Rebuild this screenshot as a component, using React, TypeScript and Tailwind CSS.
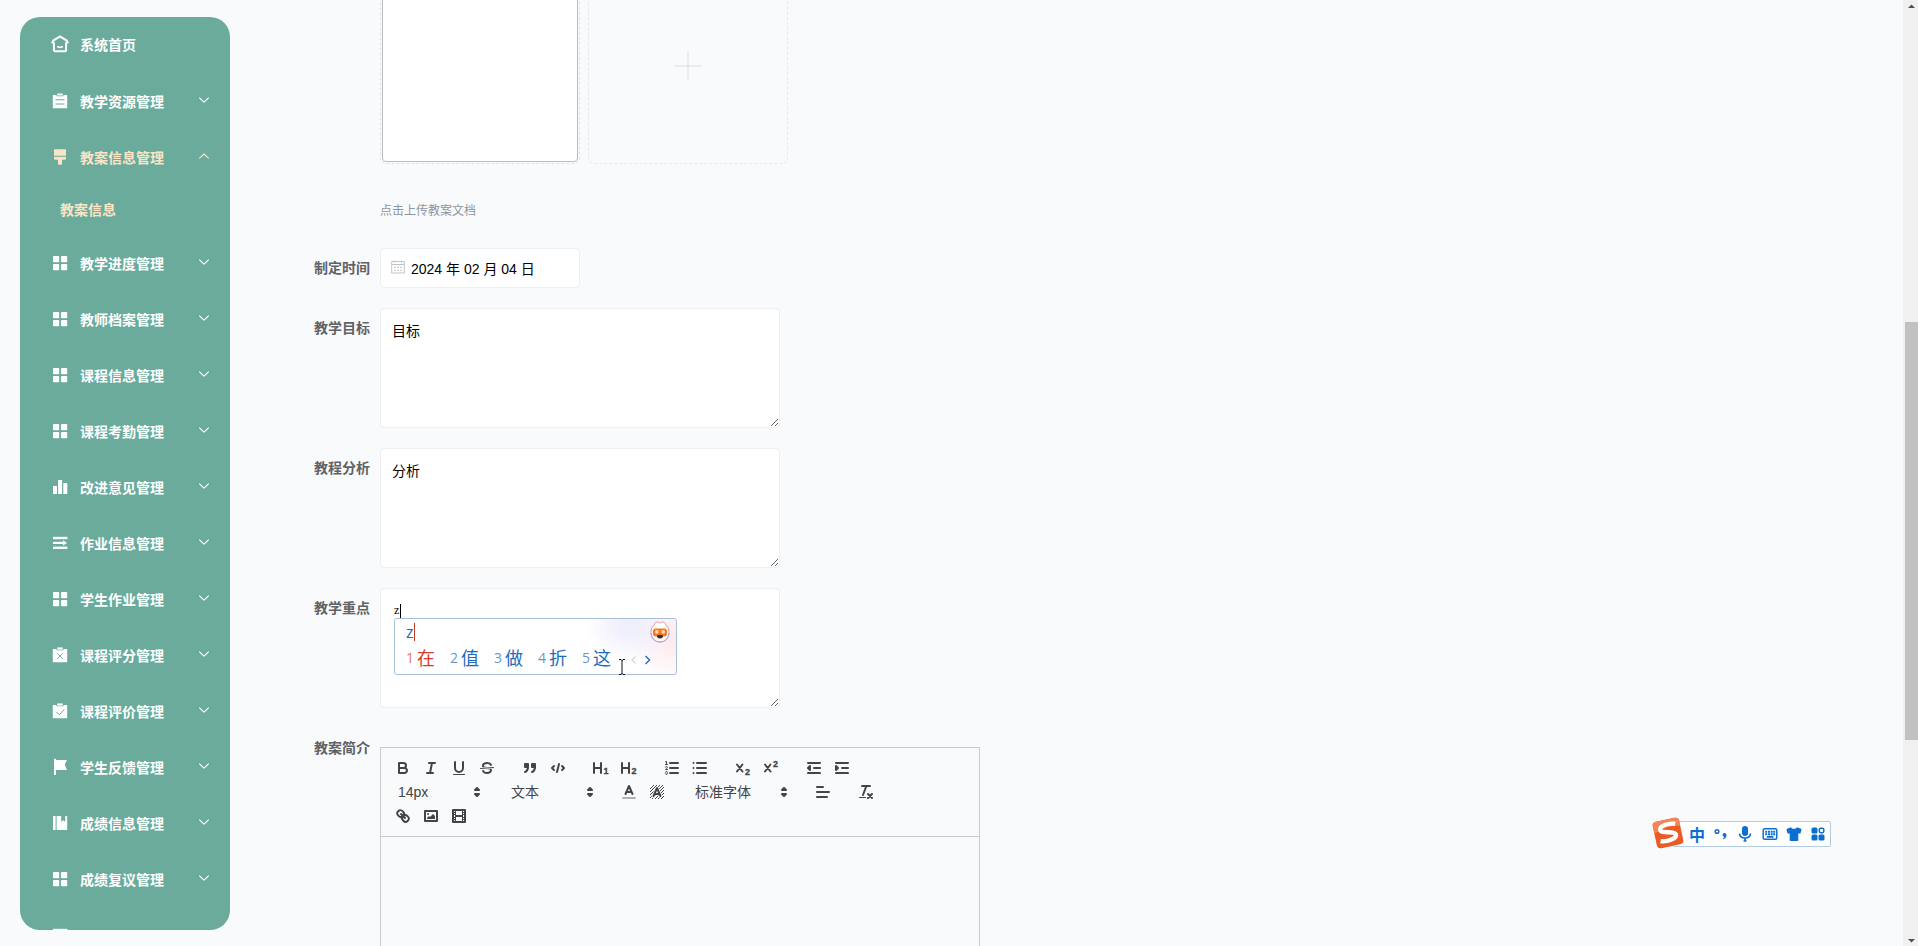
import React from "react";

const CJK = "font-['Noto_Sans_CJK_SC',sans-serif]";
const ARIAL = "font-['Liberation_Sans','Noto_Sans_CJK_SC',sans-serif]";

/* ---------- sidebar icons ---------- */

type IconName =
  | "home"
  | "order"
  | "brush"
  | "grid"
  | "data"
  | "operation"
  | "release"
  | "claim"
  | "flag"
  | "book";

function MenuIcon({ name }: { name: IconName }) {
  const hole = "#6aab9b";
  return (
    <svg viewBox="0 0 18 18" className="size-[18px] shrink-0" fill="currentColor" aria-hidden="true">
      {name === "home" && (
        <g fill="none" stroke="currentColor" strokeLinecap="round" strokeLinejoin="round">
          <path strokeWidth="2" d="M2.9 8V15.200a1 1 0 0 0 1 1H14.100a1 1 0 0 0 1-1V8M1.200 7.400 L2.200 5.700 9 1.300 15.800 5.700 16.800 7.400" />
          <path strokeWidth="1.800" d="M6.800 11.800q2.200 1 4.400 0" />
        </g>
      )}
      {(name === "order" || name === "release" || name === "claim") && (
        <>
          <path d="M2.300 3.100h3.200v1.200h7V3.100h3.200c.3 0 .5.200.5.500v12.200c0 .3-.2.500-.5.500H2.300a.5.500 0 0 1-.5-.5V3.600c0-.3.200-.5.500-.5z" />
          <path d="M6.300 1.400h5.400v2.200H6.300z" />
          {name === "order" && (
            <path d="M4.500 7.800h9M4.500 12h9" stroke={hole} strokeWidth="1" fill="none" />
          )}
          {name === "release" && (
            <path d="M6.200 7.300l5.600 5.600M11.800 7.300l-5.600 5.600" stroke={hole} strokeWidth="1" fill="none" />
          )}
          {name === "claim" && (
            <path d="M5.200 9.800l3 3 5-5.200" stroke={hole} strokeWidth="1" fill="none" />
          )}
        </>
      )}
      {name === "brush" && (
        <>
          <path d="M3.600 1.200h10.800c.4 0 .6.200.6.600v6H3v-6c0-.4.200-.6.600-.6z" />
          <path d="M3 8.800h12v1.400c0 .9-.6 1.500-1.500 1.500H11v4.100c0 .5-.3.900-.8.900H7.800c-.5 0-.8-.4-.8-.9v-4.100H4.500c-.9 0-1.500-.6-1.500-1.500z" />
        </>
      )}
      {name === "grid" && (
        <>
          <rect x="2" y="2" width="6.200" height="6.200" rx=".7" />
          <rect x="10" y="2" width="6.200" height="6.200" rx=".7" />
          <rect x="2" y="10" width="6.200" height="6.200" rx=".7" />
          <rect x="10" y="10" width="6.200" height="6.200" rx=".7" />
        </>
      )}
      {name === "data" && (
        <>
          <rect x="2" y="8" width="4" height="8" />
          <rect x="7.100" y="2" width="4" height="14" />
          <rect x="12.300" y="5" width="4" height="11" />
        </>
      )}
      {name === "operation" && (
        <>
          <rect x="2" y="2.800" width="14.400" height="2.400" />
          <rect x="2" y="7.800" width="10.500" height="2.200" />
          <path d="M12 6.300l4 2.600-4 2.600z" />
          <rect x="2" y="12.600" width="14.400" height="2.400" />
        </>
      )}
      {name === "flag" && <path d="M3 .8h1.900V2H16l-2.300 4.700L16 12H4.900v4.900H3z" />}
      {name === "book" && (
        <path d="M2 2h2.600v14H2zM5.600 2h4.600v5.700l2-1.400 2 1.400V2H15.700c.3 0 .5.200.5.500v13c0 .3-.2.500-.5.500H5.600z" />
      )}
    </svg>
  );
}

function Chevron({ up = false }: { up?: boolean }) {
  return (
    <svg viewBox="0 0 12 12" className="mb-0.5 size-3" fill="none" stroke="currentColor" strokeWidth="1.100" aria-hidden="true">
      <path d={up ? "M1.600 8.200 6 4l4.400 4.200" : "M1.600 4 6 8.200 10.400 4"} strokeLinecap="round" strokeLinejoin="round" />
    </svg>
  );
}

const MENU: { icon: IconName; label: string; children?: string[] }[] = [
  { icon: "order", label: "教学资源管理" },
  { icon: "brush", label: "教案信息管理", children: ["教案信息"] },
  { icon: "grid", label: "教学进度管理" },
  { icon: "grid", label: "教师档案管理" },
  { icon: "grid", label: "课程信息管理" },
  { icon: "grid", label: "课程考勤管理" },
  { icon: "data", label: "改进意见管理" },
  { icon: "operation", label: "作业信息管理" },
  { icon: "grid", label: "学生作业管理" },
  { icon: "release", label: "课程评分管理" },
  { icon: "claim", label: "课程评价管理" },
  { icon: "flag", label: "学生反馈管理" },
  { icon: "book", label: "成绩信息管理" },
  { icon: "grid", label: "成绩复议管理" },
];

function Sidebar() {
  return (
    <nav className="mt-[17px] mb-4 ml-5 w-[210px] shrink-0 overflow-hidden rounded-[20px] bg-[#6aab9b] text-sm font-bold text-white">
      <a href="#home" className="flex h-14 items-center gap-[11px] pb-0.5 pl-[31px]">
        <MenuIcon name="home" />
        <span>系统首页</span>
      </a>
      {MENU.map((item) => (
        <div key={item.label} className={item.children ? "text-[#fbe4c6]" : ""}>
          <button type="button" className="flex h-14 w-full items-center gap-[11px] pr-5 pl-[31px] text-left">
            <MenuIcon name={item.icon} />
            <span className="flex-1">{item.label}</span>
            <Chevron up={!!item.children} />
          </button>
          {item.children?.map((child) => (
            <a key={child} href="#plan" className="flex h-[50px] items-center pb-0.5 pl-10">
              {child}
            </a>
          ))}
        </div>
      ))}
      <div className="flex h-14 items-center pl-[31px]">
        <MenuIcon name="operation" />
      </div>
    </nav>
  );
}

/* ---------- editor toolbar ---------- */

function Glyph({ children }: { children: React.ReactNode }) {
  return (
    <svg
      viewBox="0 0 18 18"
      className="size-[18px]"
      fill="none"
      stroke="#444"
      strokeWidth="2"
      strokeLinecap="round"
      strokeLinejoin="round"
      aria-hidden="true"
    >
      {children}
    </svg>
  );
}

function Tool({ label, children }: { label: string; children: React.ReactNode }) {
  return (
    <button type="button" aria-label={label} className="flex h-6 w-7 items-center justify-center">
      <Glyph>{children}</Glyph>
    </button>
  );
}

function Group({ children }: { children: React.ReactNode }) {
  return <div className="mr-[15px] flex">{children}</div>;
}

function Picker({ label, value, wide = false }: { label: string; value: string; wide?: boolean }) {
  return (
    <div className={`grid h-6 items-center ${wide ? "w-[108px]" : "w-[98px]"}`}>
      <select
        aria-label={label}
        className="col-start-1 row-start-1 h-6 w-full appearance-none bg-transparent pl-[9px] text-sm text-[#444]"
      >
        <option>{value}</option>
      </select>
      <div className="pointer-events-none col-start-1 row-start-1 mr-px justify-self-end">
        <Glyph>
          <polygon points="7 11 9 13 11 11 7 11" />
          <polygon points="7 7 9 5 11 7 7 7" />
        </Glyph>
      </div>
    </div>
  );
}

function SmallDigit({ x, y, children }: { x: number; y: number; children: string }) {
  return (
    <text x={x} y={y} fill="#444" stroke="#444" strokeWidth=".3" fontSize="9" fontWeight="700" fontFamily="Liberation Sans, sans-serif">
      {children}
    </text>
  );
}

const HATCH = [-10, -7, -4, -1, 2, 5, 8, 11];

function Editor() {
  return (
    <div className="mt-[19px] w-[600px]">
      <div className={`flex flex-wrap border border-[#ccc] p-2 ${ARIAL}`}>
        <Group>
          <Tool label="加粗">
            <path d="M5,4H9.500A2.500,2.500,0,0,1,12,6.500v0A2.500,2.500,0,0,1,9.500,9H5V4Z" />
            <path d="M5,9h5.500A2.500,2.500,0,0,1,13,11.500v0A2.500,2.500,0,0,1,10.500,14H5V9Z" />
          </Tool>
          <Tool label="斜体">
            <path d="M7 4H13M5 14H11M8 14L10 4" />
          </Tool>
          <Tool label="下划线">
            <path d="M5,3V9a4.012,4.012,0,0,0,4,4H9a4.012,4.012,0,0,0,4-4V3" />
            <rect fill="#444" stroke="none" height="1" rx=".5" width="12" x="3" y="15" />
          </Tool>
          <Tool label="删除线">
            <line strokeWidth="1" x1="15.500" x2="2.500" y1="8.500" y2="9.500" />
            <g fill="#444" stroke="none">
              <path d="M9.007,8C6.542,7.791,6,7.519,6,6.5,6,5.792,7.283,5,9,5c1.571,0,2.765.679,2.969,1.309a1,1,0,0,0,1.9-.617C13.356,4.106,11.354,3,9,3,6.2,3,4,4.538,4,6.5a3.2,3.2,0,0,0,.5,1.843Z" />
              <path d="M8.984,10C11.457,10.208,12,10.479,12,11.5c0,0.708-1.283,1.5-3,1.5-1.571,0-2.765-.679-2.969-1.309a1,1,0,1,0-1.9.617C4.644,13.894,6.646,15,9,15c2.8,0,5-1.538,5-3.5a3.2,3.2,0,0,0-.5-1.843Z" />
            </g>
          </Tool>
        </Group>
        <Group>
          <Tool label="引用">
            <rect fill="#444" height="3" width="3" x="4" y="5" />
            <rect fill="#444" height="3" width="3" x="11" y="5" />
            <path fill="#444" d="M7,8c0,4.031-3,5-3,5" />
            <path fill="#444" d="M14,8c0,4.031-3,5-3,5" />
          </Tool>
          <Tool label="代码">
            <path d="M5 7 3 9 5 11M13 7 15 9 13 11M10 5 8 13" />
          </Tool>
        </Group>
        <Group>
          <Tool label="标题1">
            <path d="M2 4V14M9 4V14M2 9H9" />
            <SmallDigit x={11.5} y={15}>1</SmallDigit>
          </Tool>
          <Tool label="标题2">
            <path d="M2 4V14M9 4V14M2 9H9" />
            <SmallDigit x={11.5} y={15}>2</SmallDigit>
          </Tool>
        </Group>
        <Group>
          <Tool label="有序列表">
            <path d="M7 4H15M7 9H15M7 14H15" />
            <g strokeWidth="1">
              <path d="M2.500 5.500H4.500M2.500 2.800 3.500 2.400V5.500" />
              <path d="M4.500,10.500h-2c0-.234,1.850-1.076,1.850-2.234A0.959,0.959,0,0,0,2.500,8.156" />
              <path d="M2.500,14.846a0.959,0.959,0,0,0,1.850-.109A0.700,0.700,0,0,0,3.750,14a0.688,0.688,0,0,0,.6-0.736,0.959,0.959,0,0,0-1.850-.109" />
            </g>
          </Tool>
          <Tool label="无序列表">
            <path d="M6 4H15M6 9H15M6 14H15" />
            <path d="M2.500 4H2.500M2.500 9H2.500M2.500 14H2.500" />
          </Tool>
        </Group>
        <Group>
          <Tool label="下标">
            <path d="M3 5.500 8.500 12.500M8.500 5.500 3 12.500" />
            <SmallDigit x={11} y={16}>2</SmallDigit>
          </Tool>
          <Tool label="上标">
            <path d="M3 5.500 8.500 12.500M8.500 5.500 3 12.500" />
            <SmallDigit x={11} y={8}>2</SmallDigit>
          </Tool>
        </Group>
        <Group>
          <Tool label="减少缩进">
            <path d="M3 14H15M3 4H15M9 9H15" />
            <polygon fill="#444" points="5 7 5 11 3 9 5 7" />
          </Tool>
          <Tool label="增加缩进">
            <path d="M3 14H15M3 4H15M9 9H15" />
            <polygon fill="#444" points="3 7 3 11 5 9 3 7" />
          </Tool>
        </Group>
        <Group>
          <Picker label="字号" value="14px" />
        </Group>
        <Group>
          <Picker label="标题" value="文本" />
        </Group>
        <Group>
          <Tool label="文字颜色">
            <line opacity=".4" x1="3" x2="15" y1="15" y2="15" />
            <path d="M5.500 11 9 3 12.500 11M6.380 9H11.630" />
          </Tool>
          <Tool label="背景颜色">
            <g strokeWidth="1" strokeLinecap="butt">
              {HATCH.map((n) => {
                const a = Math.max(2, 2 + n);
                const b = Math.min(16, 16 + n);
                return <line key={n} x1={a} y1={18 - a + n} x2={b} y2={18 - b + n} />;
              })}
            </g>
            <path stroke="#fafbfd" strokeWidth="3.500" d="M5.500 13 9 5 12.500 13" />
            <path d="M5.500 13 9 5 12.500 13M6.380 11H11.630" />
          </Tool>
        </Group>
        <Group>
          <Picker label="字体" value="标准字体" wide />
        </Group>
        <Group>
          <Tool label="对齐">
            <path d="M3 9H15M3 14H13M3 4H9" />
          </Tool>
        </Group>
        <Group>
          <Tool label="清除格式">
            <path d="M5 3H13M6 12 9.350 3M11 11 15 15M15 11 11 15" />
            <rect fill="#444" stroke="none" height="1" rx=".5" width="7" x="2" y="14" />
          </Tool>
        </Group>
        <Group>
          <Tool label="链接">
            <line x1="7" x2="11" y1="7" y2="11" />
            <path d="M8.9,4.577a3.476,3.476,0,0,1,.36,4.679A3.476,3.476,0,0,1,4.577,8.9C3.185,7.5,2.035,6.4,4.217,4.217S7.5,3.185,8.9,4.577Z" />
            <path d="M13.423,9.1a3.476,3.476,0,0,0-4.679-.36,3.476,3.476,0,0,0,.36,4.679c1.392,1.392,2.5,2.542,4.679.36S14.815,10.5,13.423,9.1Z" />
          </Tool>
          <Tool label="图片">
            <rect height="10" width="12" x="3" y="4" />
            <circle fill="#444" stroke="none" cx="6" cy="7" r="1" />
            <polyline fill="#444" stroke="none" points="5 12 5 11 7 9 8 10 11 7 13 9 13 12 5 12" />
          </Tool>
          <Tool label="视频">
            <rect height="12" width="12" x="3" y="3" />
            <g fill="#444" stroke="none">
              <rect height="12" width="1" x="5" y="3" />
              <rect height="12" width="1" x="12" y="3" />
              <rect height="2" width="8" x="5" y="8" />
              {[5, 7, 10, 12].map((y) => (
                <React.Fragment key={y}>
                  <rect height="1" width="3" x="3" y={y} />
                  <rect height="1" width="3" x="12" y={y} />
                </React.Fragment>
              ))}
            </g>
          </Tool>
        </Group>
      </div>
      <div
        contentEditable
        suppressContentEditableWarning
        role="textbox"
        aria-label="教案简介"
        className="min-h-[300px] border border-t-0 border-[#ccc] px-4 py-3 text-sm outline-none"
      />
    </div>
  );
}

/* ---------- input method windows ---------- */

const CANDIDATES = ["在", "值", "做", "折", "这"];

function CandidateWindow() {
  return (
    <div className="absolute top-[30px] left-[14px] h-[57px] w-[283px] rounded-[3px] border border-[#a9bfd8] bg-white bg-[radial-gradient(45px_36px_at_84%_12%,#efeefb_20%,transparent_100%),radial-gradient(50px_46px_at_100%_35%,#fdeaee_10%,transparent_100%)] px-[11px] font-['Open_Sans','Noto_Sans_CJK_SC',sans-serif]">
      <div className="flex h-[26px] items-center justify-between">
        <span className="flex h-[18px] items-center border-r border-[#c0392b] text-base text-[#1d6cbd]">z</span>
        <svg viewBox="0 0 20 22" className="-mr-[5px] h-[22px] w-5" aria-hidden="true">
          <path d="M10 2.200C8 .2 4.800.6 4.400 3.800 2 5.500 1 8 1 11.500 1 17 5 21 10 21s9-4 9-9.500c0-3.500-1-6-3.400-7.700C15.200.6 12 .2 10 2.200z" fill="#fff" stroke="#f08f98" />
          <path d="M1 12c.2 5 4.200 9 9 9s8.800-4 9-9" fill="none" stroke="#8fb4ee" />
          <rect x="3" y="7.500" width="14" height="8" rx="2.500" fill="#f47a20" />
          <rect x="5.200" y="9.300" width="3.200" height="3.200" rx=".8" fill="#fbd9b5" />
          <rect x="11.600" y="9.300" width="3.200" height="3.200" rx=".8" fill="#fbd9b5" />
          <path d="M7 14.500q3-1.500 6 0 .3 3-3 3t-3-3z" fill="#3c2f2d" />
        </svg>
      </div>
      <div className="flex h-[26px] items-center">
        {CANDIDATES.map((c, i) => (
          <span
            key={c}
            className={`flex w-11 shrink-0 items-center gap-[3px] ${i === 0 ? "text-[#d93a2b]" : "text-[#1d6cbd]"}`}
          >
            <span className="w-2 text-sm opacity-70">{i + 1}</span>
            <span className="text-lg leading-6">{c}</span>
          </span>
        ))}
        <svg viewBox="0 0 26 12" className="mt-1 h-3 w-[26px] shrink-0" fill="none" strokeWidth="1.400" aria-hidden="true">
          <path d="M9.500 2.500 6 6l3.500 3.500" stroke="#d4d8dd" />
          <path d="M19.500 2 23.500 6l-4 4" stroke="#1d6cbd" />
        </svg>
      </div>
      <svg viewBox="0 0 8 18" className="absolute top-10 left-[223px] h-[18px] w-2" fill="none" stroke="#111" aria-hidden="true">
        <path d="M1 .5h2l1 1 1-1h2M4 1v14M1 15.500h2l1-1 1 1h2" />
      </svg>
    </div>
  );
}

function InputMethodBar() {
  return (
    <div className="absolute right-[87px] bottom-[95px] flex items-center">
      <svg viewBox="0 0 32 32" className="z-10 -mr-3 mb-0.5 size-8" aria-hidden="true">
        <g transform="rotate(-12 16 16)">
          <rect x="2.500" y="2.500" width="27" height="27" rx="4" fill="#ee5a24" />
          <path d="M2.500 6.500a4 4 0 0 1 4-4H25.500a4 4 0 0 1 4 4v5Q16 8 2.500 14z" fill="#f4845a" />
          <path
            d="M25 8.500C18 6 9 7.500 9 11.500S23 15 23.500 19 14 25 7 22.500"
            fill="none"
            stroke="#fff"
            strokeWidth="4.400"
          />
        </g>
      </svg>
      <div className="flex h-[26px] items-center rounded-[2px] border border-[#b4cbe4] bg-white pl-3 text-[#0b6fd0]">
        <button type="button" className="flex h-6 w-6 items-center justify-center text-base leading-6 font-bold">
          中
        </button>
        <button type="button" aria-label="标点" className="flex w-6 justify-center">
          <svg viewBox="0 0 16 16" className="size-4" aria-hidden="true">
            <circle cx="4" cy="5.500" r="1.800" fill="none" stroke="currentColor" strokeWidth="1.500" />
            <path d="M9.500 9a2 2 0 1 1 4 0c0 2-1 3.500-3 4.200l-.5-1c.9-.4 1.300-.9 1.300-1.500A1.800 1.800 0 0 1 9.500 9z" fill="currentColor" />
          </svg>
        </button>
        <button type="button" aria-label="语音" className="flex w-6 justify-center">
          <svg viewBox="0 0 16 16" className="size-4" fill="none" stroke="currentColor" strokeWidth="1.700" aria-hidden="true">
            <rect x="5" y="0" width="6" height="10" rx="3" fill="currentColor" stroke="none" />
            <path d="M2.500 7.500c.3 3 2.500 4.500 5.500 4.500s5.200-1.500 5.500-4.500M8 12v3M6.500 15h3" />
          </svg>
        </button>
        <button type="button" aria-label="键盘" className="flex w-[25px] justify-center">
          <svg viewBox="0 0 16 16" className="size-4" fill="currentColor" aria-hidden="true">
            <rect x="1.200" y="2.700" width="13.600" height="10.600" rx="1.500" fill="none" stroke="currentColor" strokeWidth="1.500" />
            <path d="M3.200 4.700h2v2h-2zM6 4.700h2v2H6zM8.700 4.700h2v2h-2zM11.200 4.700h2v2h-2zM3.200 7.300h2v2h-2zM6 7.300h2v2H6zM8.700 7.300h2v2h-2zM11.200 7.300h2v2h-2zM4.800 10h6.600v1.700H4.800z" />
          </svg>
        </button>
        <button type="button" aria-label="皮肤" className="flex w-6 justify-center">
          <svg viewBox="0 0 16 16" className="size-4" fill="currentColor" aria-hidden="true">
            <path d="M5 1.200c1 2 5 2 6 0L15 2.800c.4.200.6.600.5 1L14.600 7c-.1.500-.5.700-1 .6l-1.300-.2V14a1 1 0 0 1-1 1H4.700a1 1 0 0 1-1-1V7.400l-1.300.2c-.5.100-.9-.1-1-.6L.5 3.800c-.1-.4.1-.8.5-1z" />
          </svg>
        </button>
        <button type="button" aria-label="工具箱" className="flex w-6 justify-center">
          <svg viewBox="0 0 16 16" className="size-4" fill="currentColor" aria-hidden="true">
            <rect x="1.500" y="1.500" width="6" height="6" rx="1.500" />
            <rect x="9.300" y="2.200" width="4.500" height="4.500" rx="1.400" fill="none" stroke="currentColor" strokeWidth="1.500" />
            <rect x="1.500" y="8.500" width="6" height="6" rx="1.500" />
            <rect x="8.500" y="8.500" width="6" height="6" rx="1.500" />
          </svg>
        </button>
      </div>
    </div>
  );
}

/* ---------- form ---------- */

function Row({ id, label, children }: { id?: string; label?: string; children: React.ReactNode }) {
  return (
    <div className="mb-5 flex items-start">
      <label htmlFor={id} className="w-[150px] shrink-0 pr-[10px] text-right text-sm leading-[38px] font-bold text-[#606266]">
        {label}
      </label>
      {children}
    </div>
  );
}

function Area({ id, value, latin = false }: { id: string; value: string; latin?: boolean }) {
  return (
    <textarea
      id={id}
      defaultValue={value}
      className={`block h-[120px] w-[400px] resize rounded border border-[#eceff3] bg-white py-[11px] leading-[21px] text-black outline-none ${
        latin ? "px-[13px] text-xs" : "px-[11px] text-sm"
      }`}
    />
  );
}

function PlanForm() {
  return (
    <form className={`min-w-0 flex-1 ${CJK}`}>
      <div className="flex h-[164px] items-end gap-2 overflow-hidden pl-[150px]">
        <div className="h-[196px] w-[200px] shrink-0 rounded-md border border-dashed border-[#dfe3e8] p-px">
          <div className="h-full rounded-[4px] border border-[#b9bcc0] bg-white" />
        </div>
        <button
          type="button"
          aria-label="上传"
          className="flex h-[196px] w-[200px] shrink-0 items-center justify-center rounded-md border border-dashed border-[#e6e9ee]"
        >
          <svg viewBox="0 0 28 28" className="size-7" stroke="#e4e7eb" strokeWidth="1.500" aria-hidden="true">
            <path d="M14 0v28M0 14h28" />
          </svg>
        </button>
      </div>
      <p className="mt-9 mb-[28px] pl-[150px] text-xs leading-5 text-[#8d969f]">点击上传教案文档</p>

      <Row id="date" label="制定时间">
        <div className="flex h-10 w-[200px] items-center gap-[6px] rounded border border-[#eceff3] bg-white pl-[10px]">
          <svg viewBox="0 0 14 14" className="mb-0.5 size-[14px] shrink-0" fill="none" stroke="#c0c4cc" aria-hidden="true">
            <path d="M.7 1.500h12.600v11.500H.7zM.7 4.500h12.600M3.500.5v2M10.500.5v2" />
            <path d="M3 7.500h2M6 7.500h2M9 7.500h2M3 10.300h2M6 10.300h2M9 10.300h2" />
          </svg>
          <input
            id="date"
            defaultValue="2024 年 02 月 04 日"
            className={`h-full w-full min-w-0 bg-transparent text-sm text-black outline-none ${ARIAL}`}
          />
        </div>
      </Row>
      <Row id="goal" label="教学目标">
        <Area id="goal" value="目标" />
      </Row>
      <Row id="analysis" label="教程分析">
        <Area id="analysis" value="分析" />
      </Row>
      <Row id="focus" label="教学重点">
        <div className="relative font-['Liberation_Serif',serif]">
          <Area id="focus" value="z" latin />
          <span className="absolute top-4 left-5 h-[14px] w-px bg-black" />
          <CandidateWindow />
        </div>
      </Row>
      <Row label="教案简介">
        <Editor />
      </Row>
    </form>
  );
}

function PageScrollbar() {
  return (
    <div className="flex w-[15px] shrink-0 flex-col items-end bg-[#f0f0f0]" aria-hidden="true">
      <svg viewBox="0 0 15 17" className="h-[17px] w-[15px]" fill="#505050">
        <path d="M5 8h7L8.500 4.500z" />
      </svg>
      <div className="grow-[305]" />
      <div className="w-[13px] grow-[418] bg-[#c1c1c1]" />
      <div className="grow-[189]" />
      <svg viewBox="0 0 15 17" className="h-[17px] w-[15px]" fill="#505050">
        <path d="M5 10h7l-3.500 3.500z" />
      </svg>
    </div>
  );
}

export default function App() {
  return (
    <div className={`relative flex h-screen overflow-hidden bg-[#f9fafc] ${CJK}`}>
      <Sidebar />
      <PlanForm />
      <InputMethodBar />
      <PageScrollbar />
    </div>
  );
}
